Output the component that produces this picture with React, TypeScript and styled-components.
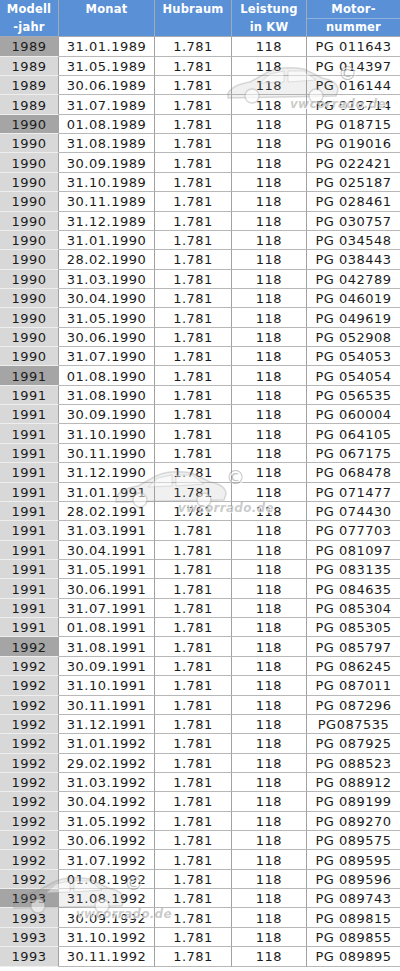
import React from "react";
import styled, { createGlobalStyle } from "styled-components";

const GlobalStyle = createGlobalStyle`
  html, body { margin: 0; padding: 0; background: #ffffff; }
  body { font-family: "DejaVu Sans", Verdana, sans-serif; }
`;

type Row = { year: string; month: string; motor: string; first?: boolean };

const rows: Row[] = [
  { year: "1989", month: "31.01.1989", motor: "PG 011643", first: true },
  { year: "1989", month: "31.05.1989", motor: "PG 014397" },
  { year: "1989", month: "30.06.1989", motor: "PG 016144" },
  { year: "1989", month: "31.07.1989", motor: "PG 018714" },
  { year: "1990", month: "01.08.1989", motor: "PG 018715", first: true },
  { year: "1990", month: "31.08.1989", motor: "PG 019016" },
  { year: "1990", month: "30.09.1989", motor: "PG 022421" },
  { year: "1990", month: "31.10.1989", motor: "PG 025187" },
  { year: "1990", month: "30.11.1989", motor: "PG 028461" },
  { year: "1990", month: "31.12.1989", motor: "PG 030757" },
  { year: "1990", month: "31.01.1990", motor: "PG 034548" },
  { year: "1990", month: "28.02.1990", motor: "PG 038443" },
  { year: "1990", month: "31.03.1990", motor: "PG 042789" },
  { year: "1990", month: "30.04.1990", motor: "PG 046019" },
  { year: "1990", month: "31.05.1990", motor: "PG 049619" },
  { year: "1990", month: "30.06.1990", motor: "PG 052908" },
  { year: "1990", month: "31.07.1990", motor: "PG 054053" },
  { year: "1991", month: "01.08.1990", motor: "PG 054054", first: true },
  { year: "1991", month: "31.08.1990", motor: "PG 056535" },
  { year: "1991", month: "30.09.1990", motor: "PG 060004" },
  { year: "1991", month: "31.10.1990", motor: "PG 064105" },
  { year: "1991", month: "30.11.1990", motor: "PG 067175" },
  { year: "1991", month: "31.12.1990", motor: "PG 068478" },
  { year: "1991", month: "31.01.1991", motor: "PG 071477" },
  { year: "1991", month: "28.02.1991", motor: "PG 074430" },
  { year: "1991", month: "31.03.1991", motor: "PG 077703" },
  { year: "1991", month: "30.04.1991", motor: "PG 081097" },
  { year: "1991", month: "31.05.1991", motor: "PG 083135" },
  { year: "1991", month: "30.06.1991", motor: "PG 084635" },
  { year: "1991", month: "31.07.1991", motor: "PG 085304" },
  { year: "1991", month: "01.08.1991", motor: "PG 085305" },
  { year: "1992", month: "31.08.1991", motor: "PG 085797", first: true },
  { year: "1992", month: "30.09.1991", motor: "PG 086245" },
  { year: "1992", month: "31.10.1991", motor: "PG 087011" },
  { year: "1992", month: "30.11.1991", motor: "PG 087296" },
  { year: "1992", month: "31.12.1991", motor: "PG087535" },
  { year: "1992", month: "31.01.1992", motor: "PG 087925" },
  { year: "1992", month: "29.02.1992", motor: "PG 088523" },
  { year: "1992", month: "31.03.1992", motor: "PG 088912" },
  { year: "1992", month: "30.04.1992", motor: "PG 089199" },
  { year: "1992", month: "31.05.1992", motor: "PG 089270" },
  { year: "1992", month: "30.06.1992", motor: "PG 089575" },
  { year: "1992", month: "31.07.1992", motor: "PG 089595" },
  { year: "1992", month: "01.08.1992", motor: "PG 089596" },
  { year: "1993", month: "31.08.1992", motor: "PG 089743", first: true },
  { year: "1993", month: "30.09.1992", motor: "PG 089815" },
  { year: "1993", month: "31.10.1992", motor: "PG 089855" },
  { year: "1993", month: "30.11.1992", motor: "PG 089895" },
];

const Page = styled.div`
  position: relative;
  width: 400px;
  height: 971px;
  overflow: hidden;
  background: #ffffff;
`;

const Grid = styled.div`
  display: grid;
  grid-template-columns: 59px 96px 77px 75px 93px;
  grid-template-rows: 37.3px;
  grid-auto-rows: 19.36px;
  border-top: 1px solid #c4c4c4;
  margin-top: -1px;
`;

const HeadCell = styled.div<{ $last?: boolean }>`
  box-sizing: border-box;
  background: #5990d6;
  color: #ffffff;
  font-weight: bold;
  font-size: 11.5px;
  letter-spacing: 0.2px;
  text-align: center;
  border-right: ${(p) => (p.$last ? "none" : "1px solid #a4aab4")};
  border-bottom: 1px solid #a4aab4;
  display: flex;
  flex-direction: column;
`;

const HeadLine = styled.div<{ $split?: boolean }>`
  flex: 1;
  display: flex;
  align-items: center;
  justify-content: center;
  ${(p) => (p.$split ? "border-bottom: 1px solid #8fb0dd;" : "")}
`;

const Cell = styled.div<{ $year?: boolean; $dark?: boolean; $last?: boolean }>`
  box-sizing: border-box;
  display: flex;
  align-items: center;
  justify-content: center;
  font-size: 13px;
  letter-spacing: 0.5px;
  color: #1c1c1c;
  background: ${(p) => (p.$dark ? "#a5a5a5" : p.$year ? "#d8d8d8" : "#ffffff")};
  border-right: ${(p) => (p.$last ? "none" : "1px solid #a2a2a2")};
  border-bottom: 1px solid ${(p) => (p.$year ? "#eeeeee" : "#b8b8b8")};
  padding-top: 1px;
  white-space: nowrap;
`;

const Mark = styled.div`
  position: absolute;
  width: 180px;
  height: 62px;
  pointer-events: none;
`;

const MarkCar = styled.svg`
  position: absolute;
  left: 0;
  top: 4px;
  width: 118px;
  height: 48px;
  opacity: 0.7;
`;

const MarkCopy = styled.span`
  position: absolute;
  left: 114px;
  top: 6px;
  font-family: "DejaVu Sans", sans-serif;
  font-size: 19px;
  color: rgba(120, 120, 120, 0.45);
  text-shadow: 1px 1px 0 rgba(255, 255, 255, 0.8);
`;

const MarkText = styled.span`
  position: absolute;
  left: 66px;
  top: 41px;
  font-family: "DejaVu Sans", sans-serif;
  font-weight: bold;
  font-style: italic;
  font-size: 12px;
  letter-spacing: 0.3px;
  color: rgba(120, 120, 120, 0.4);
  text-shadow: 1px 1px 0 rgba(255, 255, 255, 0.9);
`;

function Watermark({ left, top }: { left: number; top: number }) {
  return (
    <Mark style={{ left, top }}>
      <MarkCar viewBox="0 0 118 48">
        <path
          d="M4 34 C6 28 14 24 26 22 L44 12 C52 8 66 7 80 9 L98 18 C108 20 114 24 114 30 L112 36 L4 38 Z"
          fill="rgba(150,150,150,0.2)"
          stroke="rgba(140,140,140,0.45)"
          strokeWidth="1.5"
        />
        <path
          d="M46 14 L60 11 L60 22 L36 23 Z M64 11 L80 11 L92 20 L64 22 Z"
          fill="rgba(255,255,255,0.6)"
          stroke="rgba(140,140,140,0.35)"
          strokeWidth="1"
        />
        <circle cx="28" cy="36" r="7" fill="rgba(255,255,255,0.7)" stroke="rgba(140,140,140,0.45)" strokeWidth="1.5" />
        <circle cx="92" cy="36" r="7" fill="rgba(255,255,255,0.7)" stroke="rgba(140,140,140,0.45)" strokeWidth="1.5" />
      </MarkCar>
      <MarkCopy>©</MarkCopy>
      <MarkText>vwcorrado.de</MarkText>
    </Mark>
  );
}

export default function App() {
  return (
    <>
      <GlobalStyle />
      <Page>
        <Grid>
          <HeadCell>
            <HeadLine>Modell</HeadLine>
            <HeadLine>-jahr</HeadLine>
          </HeadCell>
          <HeadCell>
            <HeadLine>Monat</HeadLine>
            <HeadLine />
          </HeadCell>
          <HeadCell>
            <HeadLine>Hubraum</HeadLine>
            <HeadLine />
          </HeadCell>
          <HeadCell>
            <HeadLine>Leistung</HeadLine>
            <HeadLine>in KW</HeadLine>
          </HeadCell>
          <HeadCell $last>
            <HeadLine $split>Motor-</HeadLine>
            <HeadLine>nummer</HeadLine>
          </HeadCell>
          {rows.map((r, i) => (
            <React.Fragment key={i}>
              <Cell $year $dark={r.first}>{r.year}</Cell>
              <Cell>{r.month}</Cell>
              <Cell>1.781</Cell>
              <Cell>118</Cell>
              <Cell $last>{r.motor}</Cell>
            </React.Fragment>
          ))}
        </Grid>
        <Watermark left={224} top={56} />
        <Watermark left={112} top={460} />
        <Watermark left={10} top={866} />
      </Page>
    </>
  );
}
